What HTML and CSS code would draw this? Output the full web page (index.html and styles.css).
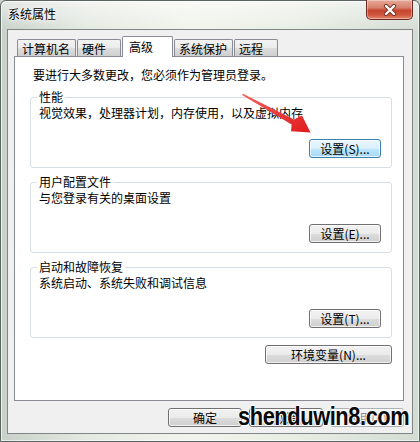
FILE: index.html
```html
<!DOCTYPE html>
<html lang="zh-CN">
<head>
  <meta charset="UTF-8" />
  <title>系统属性</title>
  <link rel="stylesheet" href="styles.css">
</head>
<body>

  <div class="window">
    <div class="titlebar">
      <span class="title">系统属性</span>
      <button class="close" aria-label="关闭">
        <svg width="16" height="12" viewBox="0 0 16 12">
          <path d="M4 2 L12 10 M12 2 L4 10" stroke="#7a3024" stroke-width="4.2" stroke-linecap="round" fill="none"/>
          <path d="M4 2 L12 10 M12 2 L4 10" stroke="#ffffff" stroke-width="2.4" stroke-linecap="round" fill="none"/>
        </svg>
      </button>
    </div>

    <div class="client">
      <div class="tabs">
        <div class="tab">计算机名</div>
        <div class="tab">硬件</div>
        <div class="tab active">高级</div>
        <div class="tab">系统保护</div>
        <div class="tab">远程</div>
      </div>

      <div class="panel">
        <p class="note">要进行大多数更改，您必须作为管理员登录。</p>

        <fieldset class="group">
          <legend>性能</legend>
          <p>视觉效果，处理器计划，内存使用，以及虚拟内存</p>
          <div class="group-actions">
            <button class="btn focused">设置(S)...</button>
          </div>
        </fieldset>

        <fieldset class="group">
          <legend>用户配置文件</legend>
          <p>与您登录有关的桌面设置</p>
          <div class="group-actions">
            <button class="btn">设置(E)...</button>
          </div>
        </fieldset>

        <fieldset class="group">
          <legend>启动和故障恢复</legend>
          <p>系统启动、系统失败和调试信息</p>
          <div class="group-actions">
            <button class="btn">设置(T)...</button>
          </div>
        </fieldset>

        <div class="env-row">
          <button class="btn wide">环境变量(N)...</button>
        </div>
      </div>

      <div class="dialog-buttons">
        <button class="btn">确定</button>
        <button class="btn">取消</button>
        <button class="btn" disabled>应用(A)</button>
      </div>
    </div>
  </div>

  <!-- red pointer drawn over the screenshot -->
  <svg class="arrow" width="420" height="442" viewBox="0 0 420 442">
    <defs>
      <linearGradient id="arrowFill" x1="0" y1="0" x2="1" y2="1">
        <stop offset="0" stop-color="#f3605a"/>
        <stop offset="1" stop-color="#e01b1f"/>
      </linearGradient>
    </defs>
    <polygon points="242.5,93.5 294,119.6 302,115.5 310.5,132.5 291,131.2 291.6,124.6 242.5,95.2" fill="url(#arrowFill)"/>
  </svg>

  <div class="watermark">shenduwin8.com</div>

</body>
</html>
```

FILE: styles.css
```css
body {
  margin: 0;
  width: 420px;
  height: 442px;
  overflow: hidden;
  position: relative;
  font-family: "Noto Sans CJK SC", "Liberation Sans", sans-serif;
  font-size: 12px;
  color: #000;
  background: #c9d1cb;
}

.window {
  box-sizing: border-box;
  width: 420px;
  height: 442px;
  border: 1px solid #5a6460;
  border-radius: 6px 6px 0 0;
  background:
    linear-gradient(to bottom, rgba(255,255,255,0.55), rgba(255,255,255,0) 30px),
    linear-gradient(to right, #c8d0c9 0%, #e3e9e1 20%, #f1f4ec 45%, #e8eee4 70%, #d3dbd3 100%);
  box-shadow: inset 1px 1px 0 rgba(255,255,255,0.7), inset -1px -1px 0 rgba(255,255,255,0.6);
}

.titlebar {
  display: flex;
  justify-content: space-between;
  align-items: flex-start;
  height: 28px;
  padding-left: 7px;
}

.title {
  margin-top: 5px;
  line-height: 16px;
  text-shadow: 0 0 6px #fff, 0 0 3px #fff;
}

.close {
  box-sizing: border-box;
  width: 47px;
  height: 20px;
  margin: -1px 6px 0 0;
  padding: 0;
  display: flex;
  align-items: center;
  justify-content: center;
  border: 1px solid #6c2b22;
  border-top: none;
  border-radius: 0 0 5px 5px;
  background: linear-gradient(to bottom, #e7a898 0%, #d7826e 40%, #c6452e 55%, #d0583f 80%, #e38a6c 100%);
  box-shadow: inset 0 0 0 1px rgba(255,255,255,0.35);
}

.client {
  box-sizing: border-box;
  width: 406px;
  height: 405px;
  margin-left: 6px;
  padding: 6px 8px 0 6px;
  border: 1px solid #7f8786;
  background: #f0f0f0;
  display: flex;
  flex-direction: column;
}

.tabs {
  display: flex;
  align-items: flex-end;
  height: 20px;
  margin-left: 3px;
}

.tab {
  box-sizing: border-box;
  height: 17px;
  min-width: 44px;
  margin-right: 1px;
  padding: 1px 5px 0 4px;
  line-height: 15px;
  border: 1px solid #898c95;
  border-bottom: none;
  border-radius: 2px 2px 0 0;
  background: linear-gradient(to bottom, #f3f3f3 0%, #ebebeb 50%, #dddddd 51%, #cfcfcf 100%);
  white-space: nowrap;
}

.tab.active {
  position: relative;
  z-index: 1;
  height: 21px;
  min-width: 51px;
  margin-bottom: -1px;
  padding: 1px 5px 0 6px;
  line-height: 17px;
  background: #fff;
}

.panel {
  box-sizing: border-box;
  height: 345px;
  padding: 11px 11px 0 15px;
  border: 1px solid #898c95;
  background: #fff;
}

.note {
  margin: 0 0 8px 3px;
  line-height: 14px;
}

.group {
  margin: 0 0 7px 0;
  padding: 0 10px 9px 8px;
  border: 1px solid #d5dfe5;
  border-radius: 3px;
  min-inline-size: 0;
}

.group legend {
  padding: 0 2px;
  margin-left: -2px;
  line-height: 14px;
}

.group p {
  margin: 2px 0 0 0;
  line-height: 14px;
}

.group-actions {
  display: flex;
  justify-content: flex-end;
  margin-top: 19px;
}

.btn {
  box-sizing: border-box;
  width: 72px;
  height: 19px;
  padding: 0;
  font-family: "Noto Sans CJK SC", "Liberation Sans", sans-serif;
  font-size: 12px;
  line-height: 16px;
  color: #000;
  border: 1px solid #707070;
  border-radius: 3px;
  background: linear-gradient(to bottom, #f2f2f2 0%, #ebebeb 50%, #dddddd 51%, #cfcfcf 100%);
  box-shadow: inset 0 0 0 1px rgba(255,255,255,0.7);
}

.btn.focused {
  border-color: #3c7fb1;
  background: linear-gradient(to bottom, #eaf6fd 0%, #d9f0fc 50%, #bee6fd 51%, #a7d9f5 100%);
}

.btn.wide {
  width: 127px;
}

.btn:disabled {
  color: #8d8d8d;
  border-color: #adb2b5;
  background: #f4f4f4;
}

.env-row {
  display: flex;
  justify-content: flex-end;
  margin-top: 5px;
}

.dialog-buttons {
  display: flex;
  justify-content: flex-end;
  gap: 7px;
  margin-top: 7px;
}

.dialog-buttons .btn {
  width: 74px;
}

.arrow {
  position: absolute;
  left: 0;
  top: 0;
  pointer-events: none;
}

.watermark {
  position: absolute;
  left: 238px;
  top: 401px;
  font-family: "Liberation Sans", sans-serif;
  font-weight: bold;
  font-size: 26px;
  line-height: 30px;
  color: #0a0a0a;
  letter-spacing: -0.5px;
  transform: scaleX(0.84);
  transform-origin: left top;
  text-shadow: 1px 0 0 #fff, -1px 0 0 #fff, 0 1px 0 #fff, 0 -1px 0 #fff;
}
```
